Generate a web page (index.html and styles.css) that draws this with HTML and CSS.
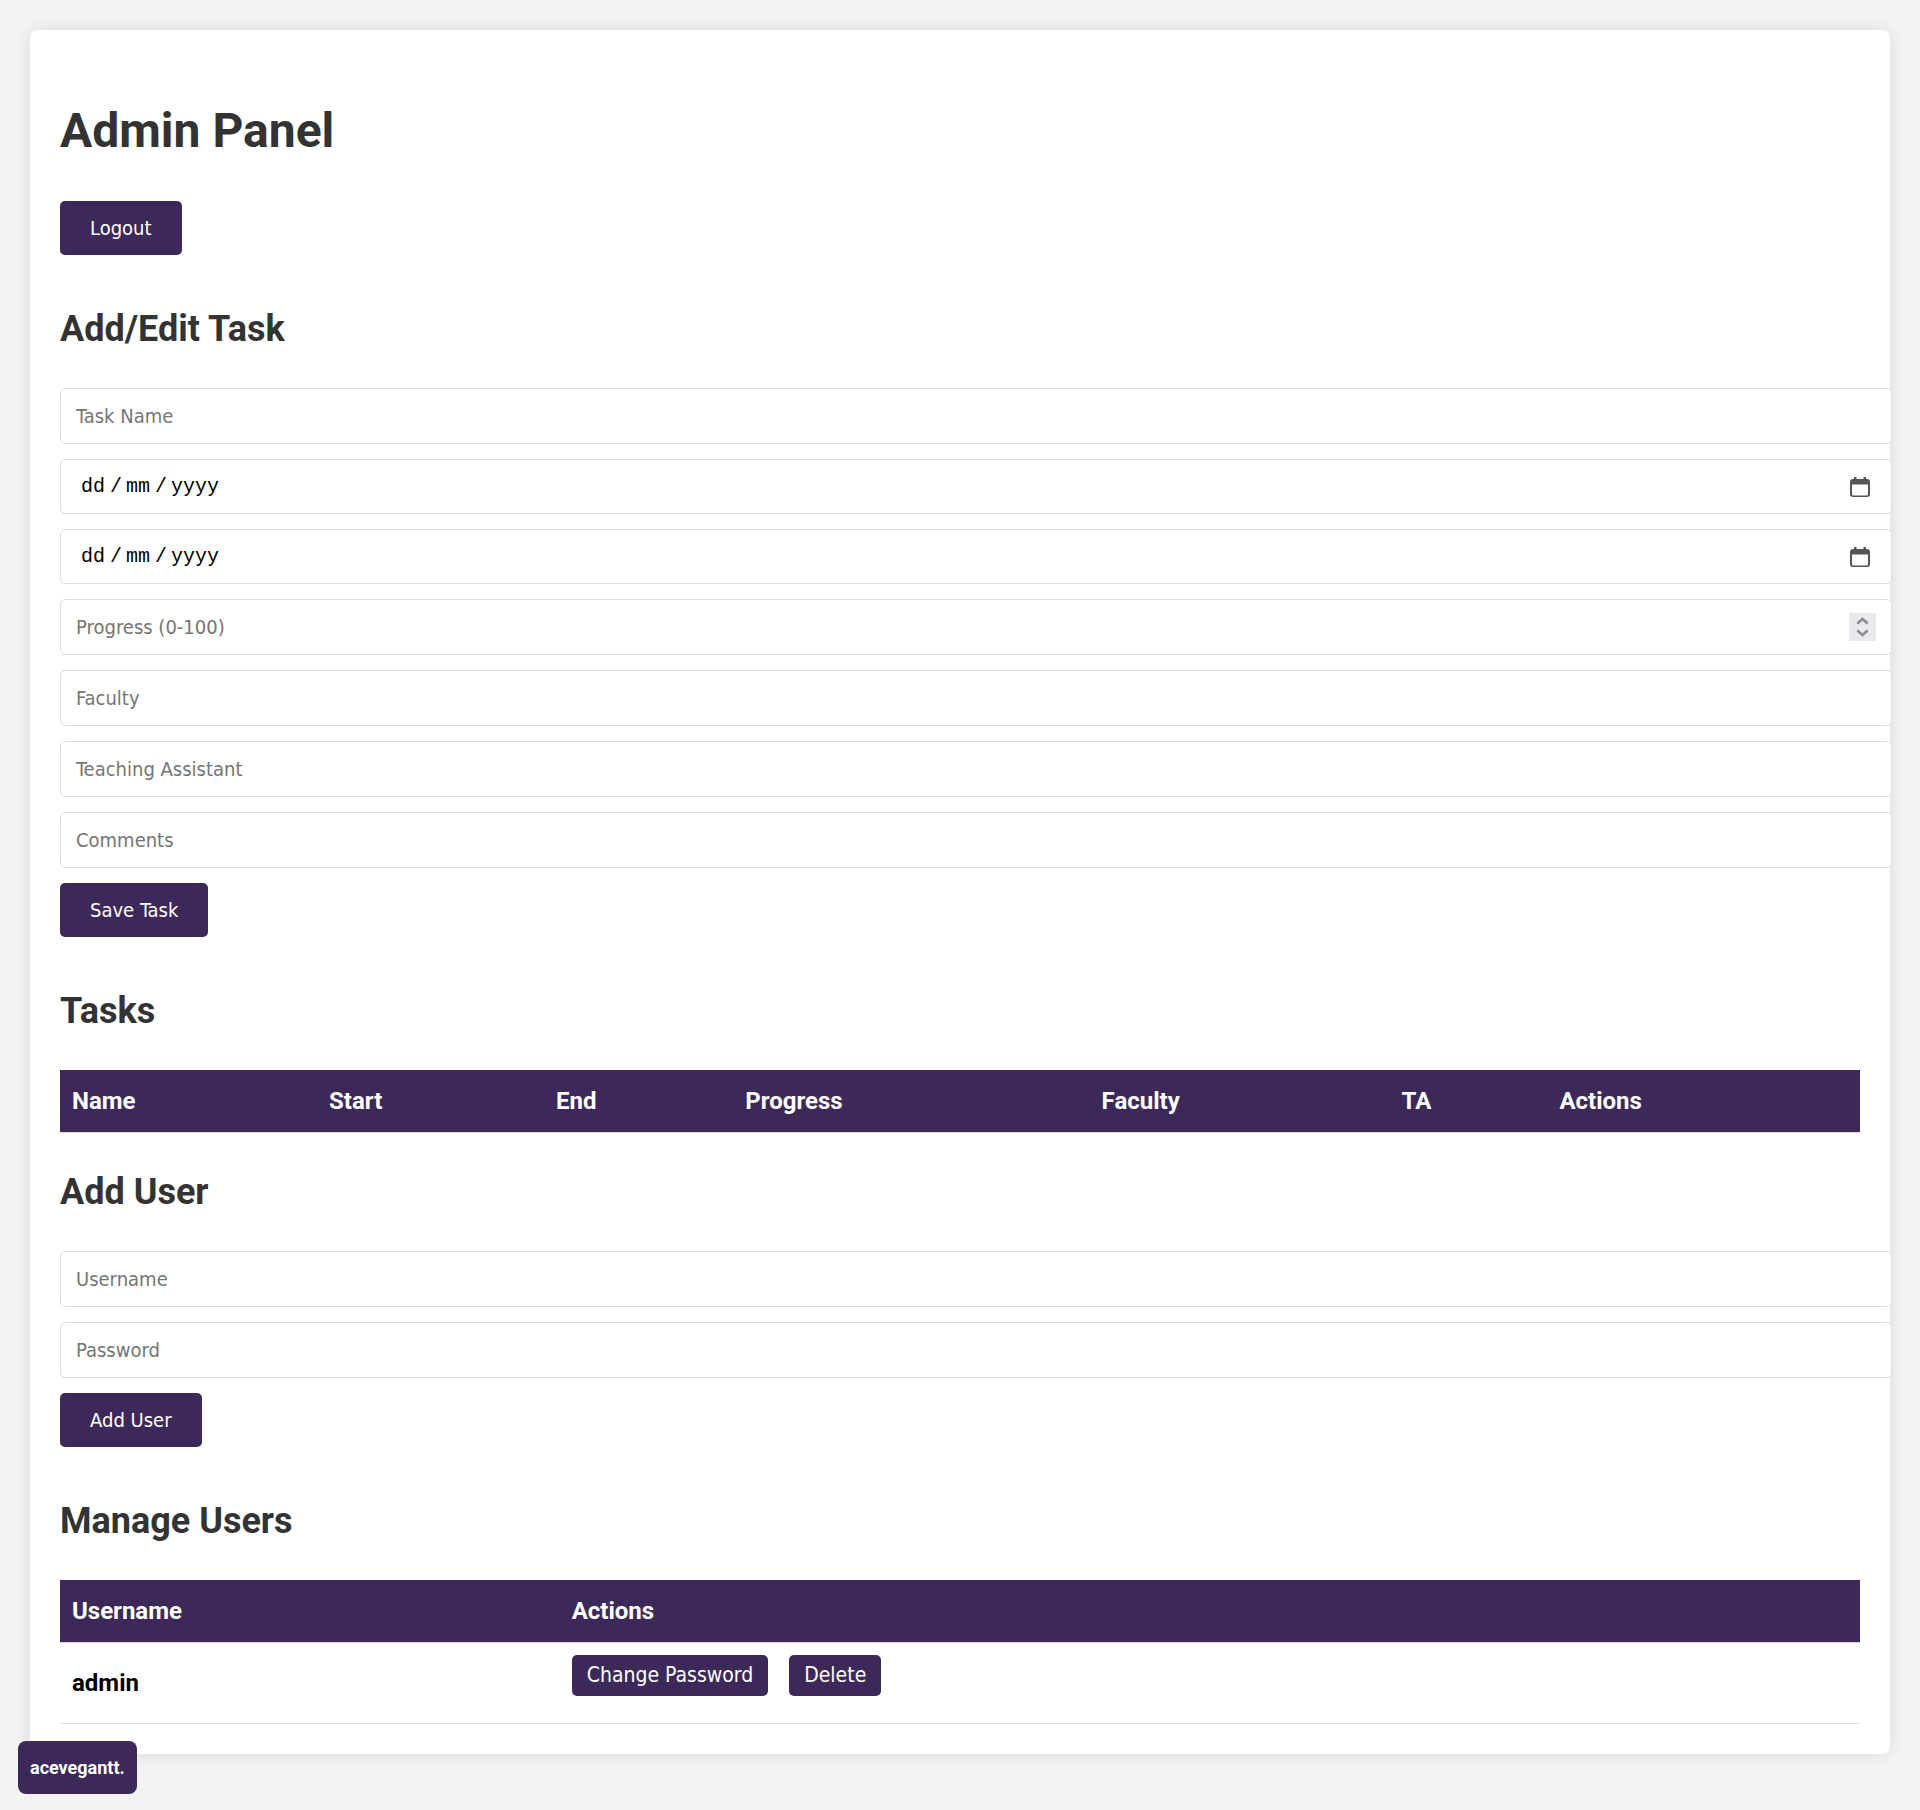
FILE: index.html
```html
<!DOCTYPE html>
<html lang="en-GB">
<head>
  <meta charset="utf-8">
  <meta name="viewport" content="width=device-width, initial-scale=1">
  <title>Admin Panel</title>
  <link rel="stylesheet" href="styles.css">
</head>
<body>
  <main class="container">
    <h1>Admin Panel</h1>
    <div class="toolbar">
      <button class="btn" type="button">Logout</button>
    </div>

    <h2>Add/Edit Task</h2>
    <form class="form">
      <input class="field" type="text" placeholder="Task Name" aria-label="Task Name">
      <input class="field field-date" type="date" aria-label="Start date">
      <input class="field field-date" type="date" aria-label="End date">
      <input class="field field-number" type="number" min="0" max="100" placeholder="Progress (0-100)" aria-label="Progress (0-100)">
      <input class="field" type="text" placeholder="Faculty" aria-label="Faculty">
      <input class="field" type="text" placeholder="Teaching Assistant" aria-label="Teaching Assistant">
      <input class="field" type="text" placeholder="Comments" aria-label="Comments">
      <button class="btn" type="submit">Save Task</button>
    </form>

    <h2>Tasks</h2>
    <table class="table">
      <thead>
        <tr>
          <th>Name</th>
          <th>Start</th>
          <th>End</th>
          <th>Progress</th>
          <th>Faculty</th>
          <th>TA</th>
          <th>Actions</th>
        </tr>
      </thead>
      <tbody></tbody>
    </table>

    <h2>Add User</h2>
    <form class="form">
      <input class="field" type="text" placeholder="Username" aria-label="Username">
      <input class="field" type="password" placeholder="Password" aria-label="Password">
      <button class="btn" type="submit">Add User</button>
    </form>

    <h2>Manage Users</h2>
    <table class="table">
      <thead>
        <tr>
          <th>Username</th>
          <th>Actions</th>
        </tr>
      </thead>
      <tbody>
        <tr>
          <td>admin</td>
          <td>
            <div class="actions">
              <button class="btn btn-small" type="button">Change Password</button>
              <button class="btn btn-small" type="button">Delete</button>
            </div>
          </td>
        </tr>
      </tbody>
    </table>
  </main>
  <div class="brand">acevegantt.</div>
</body>
</html>
```
FILE: styles.css
```css
body {
  margin: 0;
  padding: 30px;
  background: #f3f3f3;
  color: #000;
  font-family: Roboto, sans-serif;
  font-size: 24px;
  line-height: 38px;
}

.container {
  padding: 30px;
  background: #fff;
  border-radius: 8px;
  box-shadow: 0 0 20px rgba(0, 0, 0, 0.1);
}

h1,
h2 {
  color: #333;
  font-weight: 700;
}

h1 {
  margin: 0;
  padding: 32px 0;
  font-size: 48px;
  line-height: 77px;
}

h2 {
  margin: 30px 0;
  font-size: 36px;
  line-height: 58px;
}

.btn {
  display: block;
  margin: 0 0 15px;
  padding: 15px 30px;
  border: 0;
  border-radius: 5px;
  background: #3d2959;
  color: #fff;
  font-family: "DejaVu Sans Condensed", "Noto Sans", sans-serif;
  font-size: 20px;
  line-height: 24px;
  cursor: pointer;
}

.btn-small {
  padding: 7px 15px;
  font-size: 21px;
  line-height: 27px;
}

.toolbar,
.form {
  display: flow-root;
}

.field {
  display: block;
  width: 100%;
  height: 24px;
  margin: 0 0 15px;
  padding: 15px;
  border: 1px solid #ddd;
  border-radius: 5px;
  background: #fff;
  color: #000;
  font-family: "DejaVu Sans Condensed", "Noto Sans", sans-serif;
  font-size: 20px;
  line-height: 24px;
}

.field::placeholder {
  color: #757575;
}

.field-date {
  height: 23px;
  font-family: "Liberation Mono", monospace;
}

/* Day first, whatever order the browser's locale puts the parts in */
.field-date::-webkit-datetime-edit {
  padding: 0 5px;
}

.field-date::-webkit-datetime-edit-fields-wrapper {
  display: grid;
  grid-template-columns: repeat(5, max-content);
  padding: 0;
}

.field-date::-webkit-datetime-edit-day-field,
.field-date::-webkit-datetime-edit-month-field,
.field-date::-webkit-datetime-edit-year-field {
  grid-row: 1;
  padding: 0;
}

.field-date::-webkit-datetime-edit-day-field {
  grid-column: 1;
}

.field-date::-webkit-datetime-edit-month-field {
  grid-column: 3;
}

.field-date::-webkit-datetime-edit-year-field {
  grid-column: 5;
}

.field-date::-webkit-datetime-edit-text {
  grid-row: 1;
  padding: 0 4px 0 5px;
}

.field-date::-webkit-calendar-picker-indicator {
  width: 20px;
  height: 20px;
  margin: 0 6px 0 0;
  padding: 0;
  background: url("data:image/svg+xml,%3Csvg xmlns='http://www.w3.org/2000/svg' viewBox='0 0 20 20'%3E%3Cpath d='M4 0h2.500v2h7V0H16v2h1a3 3 0 0 1 3 3v12a3 3 0 0 1-3 3H3a3 3 0 0 1-3-3V5a3 3 0 0 1 3-3h1zM2 7.500v9.500a1.500 1.500 0 0 0 1.500 1.500h13a1.500 1.500 0 0 0 1.500-1.500V7.500z' fill='%23555' fill-rule='evenodd'/%3E%3C/svg%3E") center / 20px 20px no-repeat;
}

.field-number::-webkit-inner-spin-button {
  appearance: none;
  width: 27px;
  height: 28px;
  margin: -2px 0;
  opacity: 1;
  background: #e9e9ed url("data:image/svg+xml,%3Csvg xmlns='http://www.w3.org/2000/svg' viewBox='0 0 27 28'%3E%3Cpath d='M9 10l4.500-4 4.500 4M9 18l4.500 4 4.500-4' fill='none' stroke='%238b8b92' stroke-width='2.500' stroke-linecap='round'/%3E%3C/svg%3E") center / 27px 28px no-repeat;
}

.table {
  width: 100%;
  border-collapse: separate;
  border-spacing: 0;
}

.table th,
.table td {
  padding: 12px;
  border-bottom: 1px solid #ddd;
  text-align: left;
  font-weight: 700;
}

.table th {
  background: #3d2959;
  background-clip: padding-box;
  color: #fff;
}

.actions {
  display: flex;
  gap: 21px;
  padding-right: 15px;
}

.brand {
  position: fixed;
  bottom: 16px;
  left: 18px;
  padding: 12px;
  border-radius: 8px;
  background: #3d2959;
  color: #fff;
  font-size: 18px;
  font-weight: 700;
  line-height: 29px;
}
```
